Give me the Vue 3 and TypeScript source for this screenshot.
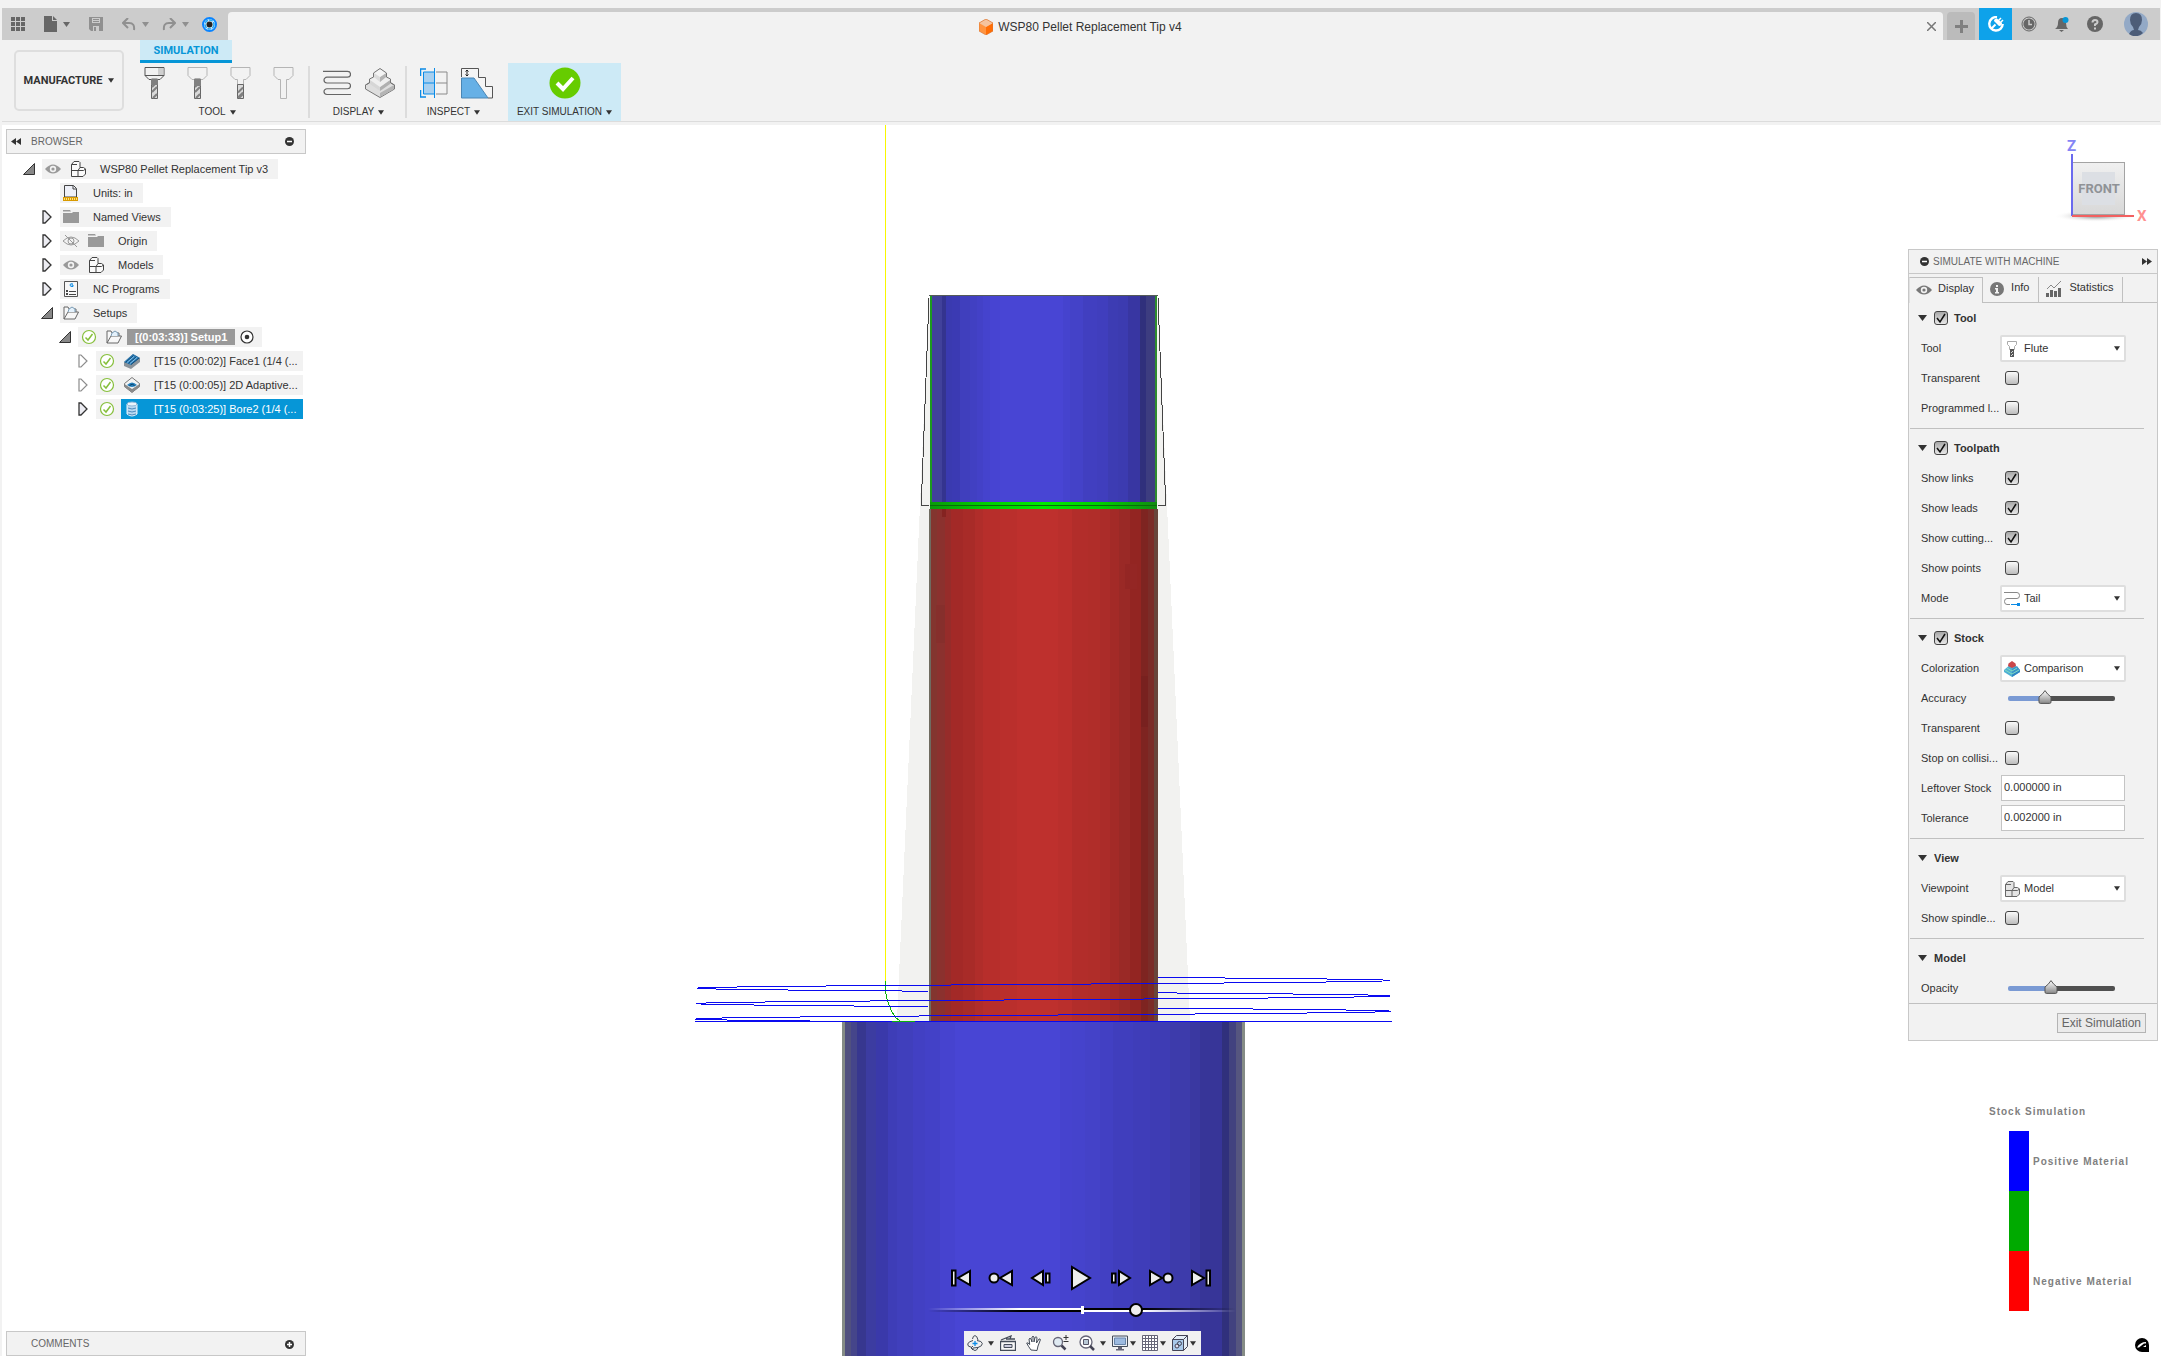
<script setup lang="ts">
import { h, ref } from 'vue'

interface IconDef { w: number; h: number; body: string }

const shaft = (y: number) =>
  `<path d="M7.500 ${y}h6v${31.5 - y}h-6z" fill="#dadada" stroke="#666" stroke-width="1"/><path d="M8 ${y + 8}l5-5M8 ${y + 13}l5-5M9 31l4-4" stroke="#808080" stroke-width="2"/>`
const holder = (c: string) =>
  `<path d="M1 .5h19v8l-4 4h-11l-4-4z" fill="#f2f2f2" stroke="${c}"/>`
const clock = '<circle cx="8" cy="8" r="7" fill="none" stroke="#666" stroke-width="1"/><circle cx="8" cy="8" r="5.600" fill="#666"/><path d="M8 4v4.500h3" fill="none" stroke="#ccc" stroke-width="1.500"/>'
const boxes = (c: string, f: string) =>
  `<path d="M1.500 15.500V3.500L4 .5h5l1 1v5h3.500l2 1.500v5L13 15.500z" fill="${f}" stroke="${c}" stroke-linejoin="round"/><path d="M1.500 9.500H8v6M8 9.500l2-3M8 9.500h5.500l2-1.500M1.500 3.500H7" fill="none" stroke="${c}"/>`
const eye = (c: string) =>
  `<path d="M0 8Q8-1 16 8Q8 17 0 8z" fill="${c}"/><circle cx="8" cy="8" r="3.200" fill="#f2f2f2"/><circle cx="8" cy="8" r="1.600" fill="${c}"/>`
const pb = 'fill="#eee" stroke="#000" stroke-width="2" stroke-linejoin="miter"'

const icons: Record<string, IconDef> = {
  apps: { w: 14, h: 14, body: '<path d="M0 0h4v4H0zM5 0h4v4H5zM10 0h4v4h-4zM0 5h4v4H0zM5 5h4v4H5zM10 5h4v4h-4zM0 10h4v4H0zM5 10h4v4H5zM10 10h4v4h-4z" fill="#666"/>' },
  file: { w: 13, h: 16, body: '<path d="M0 0h8v5h5v11H0z" fill="#666"/><path d="M9 0l4 4H9z" fill="#666"/>' },
  save: { w: 14, h: 14, body: '<path d="M0 0h14v14H2l-2-2z" fill="#909090"/><path d="M3 1h8v5H3zM4 9h6v5H4z" fill="#ccc"/><path d="M4 2h6v1H4zM4 4h6v1H4zM5 10h2v4H5z" fill="#909090"/>' },
  undo: { w: 14, h: 13, body: '<path d="M6 0L1 5l5 5M1 5h6q6 0 5 7" fill="none" stroke="#909090" stroke-width="2"/>' },
  redo: { w: 14, h: 13, body: '<path d="M8 0l5 5-5 5M13 5H7Q1 5 2 12" fill="none" stroke="#909090" stroke-width="2"/>' },
  lens: { w: 15, h: 15, body: '<circle cx="7.500" cy="7.500" r="6.500" fill="#dff2ff" stroke="#0a84ff" stroke-width="2"/><circle cx="7.500" cy="7.500" r="4.500" fill="none" stroke="#22a7f0" stroke-width="1.500" stroke-dasharray="4 1"/><circle cx="7.500" cy="7.500" r="3" fill="#222"/>' },
  caret: { w: 7, h: 5, body: '<path d="M0 0h7L3.500 5z" fill="currentColor"/>' },
  cube: { w: 14, h: 16, body: '<path d="M7 0l7 4v8l-7 4-7-4V4z" fill="#ff9440"/><path d="M7 8l7-4v8l-7 4z" fill="#ff6d05"/><path d="M7 0l7 4-7 4-7-4z" fill="#f5c39d"/><path d="M7 0l7 4v8l-7 4-7-4V4z" fill="none" stroke="#d9783a" stroke-width=".7"/>' },
  close: { w: 9, h: 9, body: '<path d="M0 0l9 9M9 0L0 9" stroke="#777" stroke-width="1.500"/>' },
  plus: { w: 13, h: 13, body: '<path d="M6.500 0v13M0 6.500h13" stroke="#808080" stroke-width="3"/>' },
  ext: { w: 16, h: 16, body: '<path d="M9 1.200A6.700 6.700 0 1 0 14.700 8" fill="none" stroke="#fff" stroke-width="2.400"/><path d="M3.500 12.500l4-4" stroke="#fff" stroke-width="2"/><path d="M6 5l5 5q3 0 3-3L9 2.500Q6 2.500 6 5z" fill="#fff"/><path d="M10 5l3-3M12 7l3-3" stroke="#fff" stroke-width="1.500"/>' },
  clock: { w: 16, h: 16, body: clock },
  bell: { w: 16, h: 16, body: '<path d="M1 13q3-2 3-6 0-5 4-5t4 5q0 4 2 6z" fill="#666"/><path d="M5 14h5l-2.500 2z" fill="#666"/><circle cx="11.500" cy="4" r="3" fill="#0696d7"/>' },
  help: { w: 16, h: 16, body: '<circle cx="8" cy="8" r="8" fill="#666"/><path d="M5.500 6.500Q5.500 4 8 4t2.500 2.300Q10.500 7.500 8 8.500v1.500" fill="none" stroke="#ccc" stroke-width="2"/><path d="M7 11.500h2v2H7z" fill="#ccc"/>' },
  avatar: { w: 24, h: 24, body: '<circle cx="12" cy="12" r="12" fill="#93a9c6"/><path d="M5 22q2-4 5-4l-1-3Q6 12 6 8q0-7 6-7t6 7q0 4-3 7l-1 3q3 0 5 3Q12 27 5 22z" fill="#4d5d78"/>' },
  tool1: { w: 21, h: 32, body: holder('#555') + '<path d="M14 1h5.500v7H14z" fill="#cfcfcf"/><path d="M1 8.500h19" stroke="#555"/>' + shaft(12) + '<path d="M7 12h7v6H7z" fill="#808080"/>' },
  tool2: { w: 21, h: 32, body: holder('#b5b5b5') + shaft(12) + '<path d="M7 12h7v7H7z" fill="#808080"/>' },
  tool3: { w: 21, h: 32, body: '<path d="M7.500 18v-5.500H5l-4-4v-8h19v8l-4 4h-2.500V18" fill="#f2f2f2" stroke="#b5b5b5"/>' + shaft(17.5) },
  tool4: { w: 21, h: 32, body: '<path d="M1 .5h19v8l-4 4h-2.500v19h-6v-19H5l-4-4z" fill="#f2f2f2" stroke="#b5b5b5"/>' },
  path: { w: 28, h: 26, body: '<path d="M0 1.500h24.500a3 3 0 0 1 0 6H4a3 3 0 0 0 0 6h20.500a3 3 0 0 1 0 6H4a3 3 0 0 0 0 6h24" transform="scale(1 .96)" fill="none" stroke="#666" stroke-width="1.200"/>' },
  pyramid: { w: 30, h: 30, body: '<path d="M15 8L29.500 17v4L15 29.500.5 21v-4z" fill="#dedede" stroke="#777"/><path d="M15 25l14-8v4l-14 8z" fill="#b4b4b4"/><path d="M15 4l10 8v4l-10 7-10-7v-4z" fill="#d6d6d6"/><path d="M15 19l10-7v4l-10 7z" fill="#b0b0b0"/><path d="M5 12l5-3h10l5 3-10 7z" fill="#efefef"/><path d="M15 0l6 5v4l-6 5-6-5V5z" fill="#dcdcdc"/><path d="M15 9l6-4v4l-6 5z" fill="#b4b4b4"/><path d="M15 1l6 4-6 4-6-4z" fill="#f4f4f4"/><path d="M.5 17l4-2v-4l4-2V5L15 .5 21.500 5v4l4 2v4l4 2" fill="none" stroke="#777"/>' },
  section: { w: 28, h: 30, body: '<path d="M3 4h11v22H3z" fill="#a8d0f0"/><path d="M16 4h11v22H16M16 15h11" fill="none" stroke="#8a8a8a"/><path d="M14.500 0v30M3.500 15h11M3.500 4v22h11M3.500 4h11" stroke="#0b8be6" fill="none"/><path d="M6 1H.5v7M6 29H.5v-7" fill="none" stroke="#0b8be6" stroke-width="1.500"/>' },
  steps: { w: 32, h: 31, body: '<path d="M.5 9V.5h17v9h7v9h7V30H27" fill="#f5f5f5" stroke="#555"/><path d="M.5 10H13l14 20H.5z" fill="#66b0e6" stroke="#4a86b5"/><path d="M6 2v6M4.500 3.500L6 2l1.500 1.500M4.500 6.500L6 8l1.500-1.500" stroke="#222" fill="none"/>' },
  ok: { w: 32, h: 32, body: '<circle cx="16" cy="16" r="15.500" fill="#66cc00"/><path d="M8 16l6 6L24 11" fill="none" stroke="#fff" stroke-width="4"/>' },
  rewind: { w: 10, h: 7, body: '<path d="M5 0v7L0 3.500zM10 0v7L5 3.500z" fill="#333"/>' },
  forward: { w: 10, h: 7, body: '<path d="M0 0v7l5-3.500zM5 0v7l5-3.500z" fill="#333"/>' },
  minus: { w: 9, h: 9, body: '<circle cx="4.500" cy="4.500" r="4.500" fill="#333"/><path d="M2 4.500h5" stroke="#fff" stroke-width="1.500"/>' },
  add: { w: 9, h: 9, body: '<circle cx="4.500" cy="4.500" r="4.500" fill="#333"/><path d="M2 4.500h5M4.500 2v5" stroke="#fff" stroke-width="1.500"/>' },
  open: { w: 12, h: 12, body: '<path d="M11.500.5v11H.5z" fill="#888" stroke="#333"/>' },
  shut: { w: 10, h: 14, body: '<path d="M1 1h2l6 6-6 6H1z" fill="#ececf2" stroke="#333" stroke-width="1.300"/>' },
  shutDim: { w: 10, h: 14, body: '<path d="M1 1h2l6 6-6 6H1z" fill="#fff" stroke="#8c8c8c" stroke-width="1.200"/>' },
  eye: { w: 16, h: 16, body: eye('#999') },
  eyeDark: { w: 16, h: 16, body: eye('#777') },
  eyeOff: { w: 16, h: 16, body: '<path d="M0 8Q8 0 16 8Q8 16 0 8z" fill="none" stroke="#999"/><circle cx="8" cy="8" r="3" fill="none" stroke="#999"/><path d="M2 2l12 12" stroke="#999"/>' },
  boxes: { w: 16, h: 16, body: boxes('#444', '#fafafa') },
  units: { w: 16, h: 16, body: '<path d="M1.500 12V.5h9l3 3V12z" fill="#eef0f8" stroke="#444"/><path d="M10 .5v3.500h3.500" fill="none" stroke="#444"/><path d="M0 12h15v4H0z" fill="#d99a00"/><path d="M1 14h13" stroke="#ffe27a" stroke-width="2" stroke-dasharray="1 1"/>' },
  folder: { w: 16, h: 16, body: '<path d="M0 1h7l1 1.500H0zM0 4h9l1-1h6v11H0z" fill="#999"/>' },
  nc: { w: 16, h: 16, body: '<path d="M1.500.5h13v15h-13z" fill="#f7f7f7" stroke="#555"/><path d="M10 3q-3-1-3 1t3 1.500V4H8.500" fill="none" stroke="#0b8be6"/><path d="M3 9h2v2H3zM3 12h2v2H3z" fill="#444"/><path d="M6 10.500h7M6 13.500h7" stroke="#444"/>' },
  setup: { w: 16, h: 16, body: '<path d="M1 14V2h4l1 2h7v3M1 14L5 7h10.500L12 14z" fill="#f7f7f7" stroke="#666" stroke-linejoin="round"/><path d="M5 7l1-3 3-2 3 2v3" fill="#e4f1fb" stroke="#7a9bb5"/>' },
  check: { w: 16, h: 16, body: '<circle cx="8" cy="8" r="6.500" fill="#fff" stroke="#86bf3b" stroke-width="1.200"/><path d="M4.500 8.500L7 11l4.500-6" fill="none" stroke="#86bf3b" stroke-width="1.500"/>' },
  radio: { w: 14, h: 14, body: '<circle cx="7" cy="7" r="6" fill="#fff" stroke="#333" stroke-width="1.200"/><circle cx="7" cy="7" r="2.300" fill="#333"/>' },
  face: { w: 16, h: 16, body: '<path d="M0 9L9 1l7 4v4l-9 7-7-3z" fill="#8a9299"/><path d="M0 9L9 1l7 4-9 7z" fill="#2f7fb8"/><path d="M1.500 9.500l8-7M4.500 10.500l8-7M7 11.500l8-6.500" stroke="#124a75"/><path d="M3 9.500l7-6M6 10.500l7-6" stroke="#7fc0ec"/>' },
  adaptive: { w: 16, h: 16, body: '<path d="M8 .5l7.500 6v3L8 15.500.5 9.500v-3z" fill="#f3f3f3" stroke="#777"/><path d="M.5 7L8 12l7.500-5v3L8 15.500.5 10z" fill="#8a8a8a"/><path d="M3 8q5-5 10 0-5 4-10 0z" fill="#2680bd"/><path d="M5.500 8.500q3-2.500 5 0" fill="none" stroke="#0b3f66"/>' },
  bore: { w: 16, h: 16, body: '<path d="M3 3v10q5 4 10 0V3z" fill="#b9d9f2" stroke="#e8f3fb"/><ellipse cx="8" cy="3" rx="5" ry="2" fill="#eaf4fc" stroke="#8fb6d6"/><path d="M4 7q4 2 8 0M4 10q4 2 8 0M4 13q4 2 8 0" stroke="#4d8bbd" fill="none"/>' },
  info: { w: 14, h: 14, body: '<circle cx="7" cy="7" r="7" fill="#777"/><path d="M6 3h2v2H6zM5 6h3v4h1v1.500H5V10h1V7.500H5z" fill="#f2f2f2"/>' },
  stats: { w: 16, h: 16, body: '<path d="M0 12h3v4H0zM4 9h3v7H4zM8 10h3v6H8zM12 7h3v9h-3z" fill="#666"/><path d="M1 8l4-4 3 3 7-7" fill="none" stroke="#888"/>' },
  tri: { w: 9, h: 6, body: '<path d="M0 0h9L4.500 6z" fill="#333"/>' },
  flute: { w: 16, h: 16, body: '<path d="M3.500.5h9v3l-2 2v3h-5v-3l-2-2z" fill="#fff" stroke="#aaa"/><path d="M6 8h4v8H6z" fill="#555"/><path d="M7 12l2-2M7 15l2-2" stroke="#ddd"/>' },
  tail: { w: 16, h: 16, body: '<path d="M0 1.500h13q2.500 0 2.500 3t-2.500 3H3q-2.500 0-2.500 3t2.500 3h3" fill="none" stroke="#888"/><path d="M7 13.500h6" stroke="#0b8be6"/><path d="M13 12h3v3h-3z" fill="#0b8be6"/>' },
  compare: { w: 16, h: 16, body: '<path d="M8 2l8 7v2l-8 5-8-5V9z" fill="#4fb0d4"/><path d="M8 13l8-4v2l-8 5z" fill="#2f86c4"/><path d="M8 8l5-3 3 4-8 4z" fill="#3a94cb"/><path d="M1 9l7 4 7-4M3 7l5 3 5-3" stroke="#7fdcc0" fill="none"/><path d="M8 0l3.500 2.500L12 5 8 7 4 5l.5-2.500z" fill="#c9474b"/>' },
  model: { w: 16, h: 16, body: boxes('#666', '#e4e4e4') },
  first: { w: 22, h: 18, body: `<path d="M2 1.500h3.500v15H2z" ${pb}/><path d="M20 2v14L8 9z" ${pb}/>` },
  prevOp: { w: 26, h: 18, body: `<circle cx="6" cy="9" r="4.500" ${pb}/><path d="M24 2v14L12 9z" ${pb}/>` },
  stepBack: { w: 22, h: 18, body: `<path d="M13 2v14L2 9z" ${pb}/><path d="M16 4.500h3.500v9H16z" ${pb}/>` },
  play: { w: 22, h: 26, body: `<path d="M2 2v22l18-11z" ${pb}/>` },
  stepFwd: { w: 22, h: 18, body: `<path d="M9 2v14l11-7z" ${pb}/><path d="M2 4.500h3.500v9H2z" ${pb}/>` },
  nextOp: { w: 26, h: 18, body: `<circle cx="20" cy="9" r="4.500" ${pb}/><path d="M2 2v14l12-7z" ${pb}/>` },
  last: { w: 22, h: 18, body: `<path d="M16.500 1.500H20v15h-3.500z" ${pb}/><path d="M2 2v14l12-7z" ${pb}/>` },
  orbit: { w: 16, h: 16, body: '<path d="M5 12.500Q0 11.500.7 9T6 5.500M10 5.500q5 .5 5.300 3T11 12.500l-5 .5M6 11l-2 2 2 2M5.500 4Q6 .6 8 .6T11 5M5.500 13Q6 15.500 8 15.500t3-3" fill="none" stroke="#444c58"/><path d="M8 6v5M5.500 8.500h5" stroke="#0b8be6" stroke-width="1.300"/>' },
  look: { w: 16, h: 16, body: '<path d="M.5 6.500h15v9H.5zM1 5l10-4-1 3M6 4h9" fill="#f7f7f7" stroke="#444c58" stroke-width="1.300"/><path d="M4 9.500h8v3H4z" fill="#ccd" stroke="#444c58"/>' },
  hand: { w: 16, h: 16, body: '<path d="M5 15Q2 11 .7 8q1-1 3 1.500L3 4q1-1.500 2 0l1 3V2q1-1.500 2 0v5l1-4.500q1-1.500 2 0L10.500 8 13 4q1.500-.5 1.300 1L12 11l-1 4.500z" fill="#fff" stroke="#444c58"/>' },
  zoom: { w: 17, h: 16, body: '<circle cx="6" cy="7" r="4.500" fill="#dfeaf2" stroke="#667" stroke-width="1.300"/><path d="M9.500 10.500l4 4" stroke="#445" stroke-width="2.500"/><path d="M14 0v5M11.500 2.500h5M11.500 6.500h5" stroke="#333"/>' },
  fit: { w: 16, h: 16, body: '<circle cx="7" cy="7" r="6" fill="#fff" stroke="#667" stroke-width="1.300"/><path d="M4.500 4.500h5v5h-5z" fill="#b9c9d6" stroke="#556"/><path d="M11 11l4 4" stroke="#445" stroke-width="2.500"/>' },
  screen: { w: 16, h: 16, body: '<path d="M.5 1h15v10.500H.5z" fill="#e8eef5" stroke="#444c58"/><path d="M2.500 3h11v6.500h-11z" fill="#9dbbe0" stroke="#6a86aa"/><path d="M6 12h4v2h2v1.500H4V14h2z" fill="#667"/>' },
  grid: { w: 16, h: 16, body: '<path d="M.5.5h15v15H.5zM3.500 0v16M6.500 0v16M9.500 0v16M12.500 0v16M0 3.500h16M0 6.500h16M0 9.500h16M0 12.500h16" fill="#fff" stroke="#667"/>' },
  view: { w: 16, h: 16, body: '<path d="M.5 4.500l4-4h11v11l-4 4H.5zM.5 4.500h11v11M11.500 4.500l4-4" fill="#e4edf5" stroke="#445"/><path d="M1 5h10v10H1z" fill="#a9c9ea"/><circle cx="5" cy="11" r="2" fill="#dde" stroke="#445"/><circle cx="7.500" cy="8.500" r="2" fill="none" stroke="#445"/>' },
  brand: { w: 14, h: 14, body: '<path d="M7 0a7 7 0 0 1 7 7v7H7A7 7 0 0 1 7 0z" fill="#000"/><path d="M2 9.500Q5 4 11 4v1.500H9L4 9.500zM5 11l6-4v2l-3 0z" fill="#fff"/>' },
}

const Ic = (p: { n: string }) => {
  const d = icons[p.n]
  return h('svg', { width: d.w, height: d.h, viewBox: `0 0 ${d.w} ${d.h}`, 'aria-hidden': 'true', innerHTML: d.body })
}
Ic.props = ['n']

interface Node { level: number; arrow?: string; icons: string[]; text: string; kind?: string }
const tree: Node[] = [
  { level: 0, arrow: 'open', icons: ['eye', 'boxes'], text: 'WSP80 Pellet Replacement Tip v3' },
  { level: 1, icons: ['units'], text: 'Units: in' },
  { level: 1, arrow: 'shut', icons: ['folder'], text: 'Named Views' },
  { level: 1, arrow: 'shut', icons: ['eyeOff', 'folder'], text: 'Origin' },
  { level: 1, arrow: 'shut', icons: ['eye', 'boxes'], text: 'Models' },
  { level: 1, arrow: 'shut', icons: ['nc'], text: 'NC Programs' },
  { level: 1, arrow: 'open', icons: ['setup'], text: 'Setups' },
  { level: 2, arrow: 'open', icons: ['check', 'setup'], text: '[(0:03:33)] Setup1', kind: 'setup' },
  { level: 3, arrow: 'shutDim', icons: ['check', 'face'], text: '[T15 (0:00:02)] Face1 (1/4 (...', kind: 'op' },
  { level: 3, arrow: 'shutDim', icons: ['check', 'adaptive'], text: '[T15 (0:00:05)] 2D Adaptive...', kind: 'op' },
  { level: 3, arrow: 'shut', icons: ['check', 'bore'], text: '[T15 (0:03:25)] Bore2 (1/4 (...', kind: 'op active' },
]

interface Field { id: string; label: string; type: 'check' | 'select' | 'range' | 'text'; on?: boolean; value?: string | number; icon?: string }
interface Section { title: string; toggle: boolean; fields: Field[] }
const sections = ref<Section[]>([
  { title: 'Tool', toggle: true, fields: [
    { id: 'tool', label: 'Tool', type: 'select', value: 'Flute', icon: 'flute' },
    { id: 'tool-transparent', label: 'Transparent', type: 'check', on: false },
    { id: 'programmed', label: 'Programmed l...', type: 'check', on: false },
  ] },
  { title: 'Toolpath', toggle: true, fields: [
    { id: 'links', label: 'Show links', type: 'check', on: true },
    { id: 'leads', label: 'Show leads', type: 'check', on: true },
    { id: 'cutting', label: 'Show cutting...', type: 'check', on: true },
    { id: 'points', label: 'Show points', type: 'check', on: false },
    { id: 'mode', label: 'Mode', type: 'select', value: 'Tail', icon: 'tail' },
  ] },
  { title: 'Stock', toggle: true, fields: [
    { id: 'color', label: 'Colorization', type: 'select', value: 'Comparison', icon: 'compare' },
    { id: 'accuracy', label: 'Accuracy', type: 'range', value: 32 },
    { id: 'stock-transparent', label: 'Transparent', type: 'check', on: false },
    { id: 'collision', label: 'Stop on collisi...', type: 'check', on: false },
    { id: 'leftover', label: 'Leftover Stock', type: 'text', value: '0.000000 in' },
    { id: 'tolerance', label: 'Tolerance', type: 'text', value: '0.002000 in' },
  ] },
  { title: 'View', toggle: false, fields: [
    { id: 'viewpoint', label: 'Viewpoint', type: 'select', value: 'Model', icon: 'model' },
    { id: 'spindle', label: 'Show spindle...', type: 'check', on: false },
  ] },
  { title: 'Model', toggle: false, fields: [
    { id: 'opacity', label: 'Opacity', type: 'range', value: 39 },
  ] },
])

const playback = [
  ['first', 'Start'], ['prevOp', 'Previous operation'], ['stepBack', 'Step back'], ['play', 'Play'],
  ['stepFwd', 'Step forward'], ['nextOp', 'Next operation'], ['last', 'End'],
]
/* icon, button class, accessible name */
const nav: [string, string, string][] = [
  ['orbit', 'drop-wide', 'Orbit'], ['look', '', 'Look at'], ['hand', '', 'Pan'], ['zoom', '', 'Zoom'],
  ['fit', 'drop-wide', 'Fit'], ['screen', 'drop-near', 'Display settings'], ['grid', 'drop-near', 'Grid'], ['view', 'drop-near', 'Viewports'],
]
const progress = ref(684)

/* Shading bands of the stock: left edge of each band and its colour. */
type Band = [number, string]
const bands = (list: Band[], end: number) =>
  list.map(([x, fill], i) => ({ x, fill, width: (list[i + 1]?.[0] ?? end) - x }))
const upper = bands([
  [930, '#1d9a1d'], [932, '#41419b'], [942, '#34348f'], [946, '#3a3ab0'], [952, '#3b3ab3'], [960, '#403fbd'], [970, '#4140c2'],
  [977, '#4341c7'], [983, '#4543cd'], [990, '#4744d2'], [1000, '#4845d4'], [1063, '#4543ce'], [1070, '#4442c8'],
  [1083, '#413fc0'], [1097, '#403ebd'], [1108, '#3d3cb3'], [1118, '#3c3bb0'],
  [1128, '#3836a2'], [1140, '#30307c'], [1146, '#3d3d80'], [1155, '#2e8b2e'],
], 1157)
const middle = bands([
  [929, '#6f6b60'], [931, '#83352f'], [937, '#8b312e'], [945, '#962c2a'], [951, '#a32927'], [963, '#a82b28'],
  [975, '#b02d2a'], [983, '#b72e2b'], [1000, '#ba2f2c'], [1017, '#be302d'], [1058, '#ba2f2c'], [1072, '#b22d2a'],
  [1088, '#b02d29'], [1100, '#ab2c29'], [1110, '#a32a27'], [1119, '#9a2926'], [1130, '#932522'], [1141, '#7e2421'], [1148, '#7b2c28'], [1154, '#68453b'],
], 1158)
const lower = bands([
  [842, '#858c86'], [845, '#50507f'], [851, '#45458a'], [857, '#37378f'], [866, '#3c3ca1'], [876, '#3a39aa'],
  [888, '#3e3db7'], [897, '#403fbc'], [913, '#4240c3'], [925, '#4341c7'], [940, '#4643cf'], [955, '#4845d4'], [1060, '#4643ce'], [1072, '#4543cc'], [1085, '#4442c8'],
  [1100, '#4240c3'], [1113, '#403ebd'], [1133, '#3f3db9'], [1150, '#3e3cb4'], [1170, '#3d3bab'], [1190, '#3a38a1'], [1200, '#373598'],
  [1222, '#30307c'], [1229, '#42427f'], [1236, '#56567f'], [1242, '#858c86'],
], 1245)

/* Helical passes, as one-pixel runs: start, end, row. */
const runs: [number, number, number][] = [
  [1158, 1225, 977], [1225, 1327, 978], [1327, 1383, 979], [1383, 1390, 980], [1326, 1382, 981], [1224, 1326, 982],
  [1091, 1224, 983], [951, 1091, 984], [826, 951, 985], [737, 826, 986], [698, 737, 987], [697, 716, 988],
  [716, 788, 989], [788, 902, 990], [902, 928, 991], [1158, 1177, 992], [1177, 1293, 993], [1293, 1368, 994],
  [1368, 1390, 995], [1354, 1390, 996], [1268, 1354, 997], [1144, 1268, 998], [1004, 1144, 999], [870, 1004, 1000],
  [765, 870, 1001], [706, 765, 1002], [696, 706, 1003], [701, 754, 1004], [754, 854, 1005], [854, 928, 1006],
  [1158, 1253, 1008], [1253, 1346, 1009], [1346, 1389, 1010], [1375, 1391, 1011], [1307, 1375, 1012],
  [1195, 1307, 1013], [1058, 1195, 1014], [919, 1058, 1015], [800, 919, 1016], [722, 800, 1017],
  [696, 722, 1018], [695, 727, 1019], [727, 810, 1020], [695, 1392, 1021],
]
const helix = runs.map(([a, b, y]) => `M${a} ${y}H${b}v1H${a}z`).join('')
</script>

<template>
  <div class="app">
    <header class="titlebar">
      <div class="quick">
        <button aria-label="Data panel"><Ic n="apps" /></button>
        <button class="dark" aria-label="File"><Ic n="file" /><Ic n="caret" /></button>
        <button aria-label="Save"><Ic n="save" /></button>
        <button aria-label="Undo"><Ic n="undo" /><Ic n="caret" /></button>
        <button class="tight" aria-label="Redo"><Ic n="redo" /><Ic n="caret" /></button>
        <button class="tight" aria-label="Extensions"><Ic n="lens" /></button>
      </div>
      <div class="doc">
        <div class="doc-name"><Ic n="cube" /><span>WSP80 Pellet Replacement Tip v4</span></div>
        <button aria-label="Close"><Ic n="close" /></button>
      </div>
      <button class="new" aria-label="New tab"><Ic n="plus" /></button>
      <div class="account">
        <button class="on" aria-label="Updates"><Ic n="ext" /></button>
        <button aria-label="Job status"><Ic n="clock" /></button>
        <button aria-label="Notifications"><Ic n="bell" /></button>
        <button aria-label="Help"><Ic n="help" /></button>
        <button class="me" aria-label="Account"><Ic n="avatar" /></button>
      </div>
    </header>

    <nav class="ribbon">
      <button class="workspace">MANUFACTURE <Ic n="caret" /></button>
      <div class="tools">
        <button class="tab">SIMULATION</button>
        <div class="groups">
          <div class="group first">
            <div class="icons">
              <button v-for="i in 4" :key="i" :aria-label="'Tool display ' + i"><Ic :n="'tool' + i" /></button>
            </div>
            <button class="menu">TOOL <Ic n="caret" /></button>
          </div>
          <div class="group">
            <div class="icons">
              <button aria-label="Toolpath"><Ic n="path" /></button>
              <button aria-label="Stock"><Ic n="pyramid" /></button>
            </div>
            <button class="menu">DISPLAY <Ic n="caret" /></button>
          </div>
          <div class="group plain">
            <div class="icons">
              <button aria-label="Section"><Ic n="section" /></button>
              <button aria-label="Distance"><Ic n="steps" /></button>
            </div>
            <button class="menu">INSPECT <Ic n="caret" /></button>
          </div>
          <div class="group exit">
            <div class="icons"><button aria-label="Finish"><Ic n="ok" /></button></div>
            <button class="menu">EXIT SIMULATION <Ic n="caret" /></button>
          </div>
        </div>
      </div>
    </nav>

    <main class="stage">
      <svg class="scene" viewBox="0 125 2161 1231" preserveAspectRatio="xMidYMin slice" shape-rendering="crispEdges" aria-hidden="true">
        <polygon points="929,298 1158,298 1167,505 1190,1021 897,1021 920,505" fill="#f2f2f0" />
        <g>
          <rect v-for="b in lower" :key="'l' + b.x" :x="b.x" y="1021" :width="b.width" height="335" :fill="b.fill" />
          <rect v-for="b in middle" :key="'m' + b.x" :x="b.x" y="509" :width="b.width" height="512" :fill="b.fill" />
          <rect v-for="b in upper" :key="'u' + b.x" :x="b.x" y="296" :width="b.width" height="206" :fill="b.fill" />
        </g>
        <rect x="942" y="502" width="4" height="15" fill="#842321" />
        <rect x="936" y="605" width="9" height="38" fill="#862f2c" />
        <rect x="1125" y="564" width="12" height="25" fill="#942624" />
        <rect x="1141" y="676" width="7" height="51" fill="#78211f" />
        <linearGradient id="floor">
          <stop offset="0" stop-color="#0a9a0a" /><stop offset=".25" stop-color="#00cf00" />
          <stop offset=".5" stop-color="#00ea00" /><stop offset=".75" stop-color="#00cf00" />
          <stop offset="1" stop-color="#118a11" />
        </linearGradient>
        <rect x="930" y="502" width="227" height="7" fill="url(#floor)" />
        <rect x="930" y="505" width="227" height="1" fill="#0b6b0b" />
        <rect x="929" y="295" width="229" height="1" fill="#555c58" />
        <path d="M929 298L921.500 498V505.500H929M1158 505.500H1165.500V498L1158 298" fill="none" stroke="#444" />
        <rect x="885" y="125" width="1" height="856" fill="#f8f800" />
        <path d="M885.500 981V991L887.500 1001L891.500 1011L896 1018L900 1020.500" fill="none" stroke="#0ab40a" />
        <path :d="helix" fill="#0a0af0" />
        <rect x="892" y="1021" width="23" height="1" fill="#0ab40a" />
      </svg>

      <div class="overlay">
        <div class="left">
          <section class="browser">
            <div class="bar"><Ic n="rewind" /><span>BROWSER</span><Ic n="minus" /></div>
            <ul>
              <li v-for="(n, i) in tree" :key="i" :style="{ paddingLeft: 16 + 18 * n.level + 'px' }">
                <i class="arrow"><Ic v-if="n.arrow" :n="n.arrow" /></i>
                <div class="chip" :class="n.kind">
                  <Ic v-for="k in n.icons" :key="k" :n="k" />
                  <span>{{ n.text }}</span>
                  <Ic v-if="n.kind === 'setup'" n="radio" />
                </div>
              </li>
            </ul>
          </section>
          <div class="bar"><span>COMMENTS</span><Ic n="add" /></div>
        </div>

        <div class="mid">
          <div class="playback">
            <button v-for="p in playback" :key="p[0]" :aria-label="p[1]"><Ic :n="p[0]" /></button>
          </div>
          <input v-model="progress" class="timeline" type="range" min="0" max="1000" aria-label="Timeline" />
          <div class="nav">
            <button v-for="n in nav" :key="n[0]" :class="n[1]" :aria-label="n[2]"><Ic :n="n[0]" /><Ic v-if="n[1]" n="caret" /></button>
          </div>
        </div>

        <div class="right">
          <svg class="viewcube" width="110" height="124" viewBox="2048 125 110 124">
            <defs>
              <linearGradient id="cubeface" x2="0" y2="1"><stop stop-color="#f0f0f0" /><stop offset="1" stop-color="#d8d8d8" /></linearGradient>
              <radialGradient id="cubeshade"><stop stop-color="#777" /><stop offset="1" stop-color="#fff" stop-opacity="0" /></radialGradient>
            </defs>
            <ellipse cx="2096" cy="216" rx="42" ry="6" fill="url(#cubeshade)" />
            <rect x="2072.500" y="162.500" width="52" height="52" fill="url(#cubeface)" stroke="#a3a3a3" />
            <rect x="2082" y="172" width="33" height="33" fill="#dcdfe4" />
            <text x="2099" y="193" text-anchor="middle" class="front">FRONT</text>
            <path d="M2072 154v62" stroke="#6a6aee" stroke-width="2" />
            <path d="M2072 216h62" stroke="#f26060" stroke-width="2" />
            <text x="2067" y="151" class="axis" fill="#8585f5">Z</text>
            <text x="2137" y="221" class="axis" fill="#ff9090">X</text>
          </svg>

          <section class="panel">
            <div class="bar"><Ic n="minus" /><span>SIMULATE WITH MACHINE</span><Ic n="forward" /></div>
            <div class="tabs">
              <button class="current"><Ic n="eyeDark" />Display</button>
              <button><Ic n="info" />Info</button>
              <button><Ic n="stats" />Statistics</button>
            </div>
            <fieldset v-for="s in sections" :key="s.title">
              <div class="row head">
                <Ic n="tri" />
                <input v-if="s.toggle" :id="'s-' + s.title" type="checkbox" checked />
                <label :for="s.toggle ? 's-' + s.title : undefined">{{ s.title }}</label>
              </div>
              <div v-for="f in s.fields" :key="f.id" class="row">
                <label :for="f.id">{{ f.label }}</label>
                <input v-if="f.type === 'check'" :id="f.id" v-model="f.on" type="checkbox" />
                <div v-else-if="f.type === 'select'" class="select">
                  <select :id="f.id"><option>{{ f.value }}</option></select>
                  <Ic :n="f.icon" class="lead" />
                  <Ic n="caret" class="drop" />
                </div>
                <input v-else-if="f.type === 'range'" :id="f.id" v-model="f.value" type="range" class="slider" :style="{ '--fill': f.value + '%' }" />
                <input v-else :id="f.id" v-model="f.value" type="text" />
              </div>
            </fieldset>
            <div class="foot"><button>Exit Simulation</button></div>
          </section>

          <section class="legend">
            <h2>Stock Simulation</h2>
            <div class="level"><i style="background: #0000ff"></i><span>Positive Material</span></div>
            <div class="level"><i style="background: #00aa00"></i></div>
            <div class="level"><i style="background: #ff0000"></i><span>Negative Material</span></div>
          </section>
          <div class="brand"><Ic n="brand" /></div>
        </div>
      </div>
    </main>
  </div>
</template>

<style>
body { background: #f2f2f2; }
</style>

<style scoped>
.app {
  display: flex;
  flex-direction: column;
  min-height: 100vh;
  box-sizing: border-box;
  padding-top: 8px;
  font: 11px/16px "Liberation Sans", Arial, sans-serif;
  color: #333;
  background: #f2f2f2;
}
.app * { box-sizing: border-box; }
svg { display: block; flex: none; }
button {
  display: flex;
  align-items: center;
  justify-content: center;
  padding: 0;
  border: 0;
  background: none;
  font: inherit;
  color: inherit;
}

/* title bar */
.titlebar { display: flex; height: 32px; margin: 0 1px 0 2px; background: #ccc; }
.quick { display: flex; align-items: center; gap: 19px; width: 226px; padding-left: 9px; color: #909090; }
.quick button { gap: 6px; }
.quick .dark { color: #666; }
.quick .tight { margin-left: -6px; }
.doc {
  display: flex;
  flex: 1;
  align-items: center;
  margin-top: 4px;
  padding: 1px 7px 0 6px;
  border-radius: 4px 4px 0 0;
  background: #f2f2f2;
}
.doc-name { display: flex; flex: 1; justify-content: center; align-items: center; gap: 5px; font-size: 12px; }
.doc button { width: 9px; }
.new { width: 28px; margin: 4px 4px 0; border-radius: 4px 4px 0 0; background: #bbb; }
.account { display: flex; }
.account button { width: 33px; }
.account .on { background: #0ea2ea; }
.account .me { width: 49px; }

/* ribbon */
.ribbon { display: flex; height: 82px; margin: 0 1px 3px 2px; border-bottom: 1px solid #dcdcdc; }
.workspace {
  gap: 6px;
  width: 110px;
  height: 61px;
  margin: 10px 16px 0 12px;
  border: 2px solid #dedede;
  border-radius: 5px;
  font: bold 11px/16px Roboto, sans-serif;
}
.workspace svg, .menu svg { width: 6px; height: 5px; }
.tab {
  width: 92px;
  height: 23px;
  padding-top: 2px;
  border-bottom: 3px solid #0696d7;
  background: #cdeaf6;
  color: #0696d7;
  font: bold 11px/16px Roboto, sans-serif;
}
.groups { display: flex; }
.group { display: flex; flex-direction: column; align-items: center; width: 97px; height: 58px; padding-top: 4px; position: relative; }
.group.first { width: 170px; padding-right: 12px; }
.group.plain { width: 101px; padding-right: 4px; }
.group.exit { width: 113px; background: #cdeaf6; }
.group:not(.plain, .exit)::after { content: ""; position: absolute; right: 0; top: 3px; width: 2px; height: 52px; background: #dcdcdc; }
.icons { display: flex; gap: 11px; }
.icons button { width: 32px; height: 32px; }
.menu { gap: 4px; margin-top: 5px; height: 16px; font-size: 10px; }
.first .menu, .plain .menu { margin-right: 4px; }

/* stage */
.stage { position: relative; display: flex; flex: 1; margin-left: 2px; background: #fff; overflow: hidden; }
.scene { position: absolute; top: 0; left: -2px; width: calc(100% + 2px); height: 100%; }
.overlay { position: relative; display: grid; grid-template-columns: 300px 1fr 300px; width: 100%; padding: 0 3px 0 4px; }
.left { display: flex; flex-direction: column; justify-content: space-between; padding-top: 4px; }
.bar {
  display: flex;
  align-items: center;
  height: 25px;
  padding: 0 11px 0 4px;
  border: 1px solid #c8c8c8;
  background: #f2f2f2;
  color: #666;
  font-size: 10px;
}
.bar span { flex: 1; }
.left .bar span { padding-left: 10px; }
.left > .bar { padding-top: 1px; }
.left > .bar span { padding-left: 20px; }
ul { margin: 3px 0 0; padding: 0; list-style: none; }
li { display: flex; align-items: center; height: 24px; }
.arrow { display: flex; justify-content: center; width: 14px; margin-right: 6px; }
.chip { display: flex; align-items: center; gap: 9px; height: 20px; padding: 0 10px 0 3px; background: #f2f2f2; white-space: nowrap; }
.chip span { padding-left: 5px; }
.chip.setup { gap: 5px; padding-right: 8px; }
.chip.setup svg:first-child { margin-right: 4px; }
.chip.setup span { padding: 0 8px; background: #999; color: #fff; font-weight: bold; }
.chip.op { width: 207px; padding-right: 0; }
.chip.active { background: linear-gradient(90deg, #f2f2f2 25px, #0696d7 25px); color: #fff; }

/* playback */
.mid { display: flex; flex-direction: column; justify-content: flex-end; align-items: center; padding-bottom: 1px; }
.playback { display: flex; margin: 0 2px 12px 0; }
.playback button { width: 40px; height: 26px; }
.timeline { appearance: none; width: 308px; height: 14px; margin: 0 0 14px; background: none; }
.timeline::-webkit-slider-runnable-track {
  height: 8px;
  background:
    linear-gradient(#fff, #fff) 153px 0 / 3px 8px no-repeat,
    linear-gradient(90deg, transparent, #fff 60%) 0 2px / 153px 2px no-repeat,
    linear-gradient(90deg, transparent, #000 60%) 0 4px / 153px 2px no-repeat,
    linear-gradient(90deg, #000 40%, transparent) 156px 2px / 152px 2px no-repeat,
    linear-gradient(90deg, #fff 40%, transparent) 156px 4px / 152px 2px no-repeat;
}
.timeline::-webkit-slider-thumb { appearance: none; width: 14px; height: 14px; margin-top: -3px; border: 2px solid #000; border-radius: 50%; background: #eee; }
.nav { display: flex; align-items: center; width: 237px; height: 24px; padding-left: 3px; background: #f1f1f1; }
.nav button { margin-right: 10px; }
.nav .drop-wide { gap: 5px; margin-right: 6px; }
.nav .drop-near { gap: 2px; margin-right: 6px; }
.nav button svg:nth-child(2) { width: 6px; height: 5px; }

/* right column */
.right { display: flex; flex-direction: column; align-items: flex-end; }
.front { font: bold 13px Roboto, sans-serif; fill: #8f9296; }
.axis { font: bold 15px Roboto, sans-serif; }
.panel { width: 250px; border: 1px solid #c8c8c8; background: #f2f2f2; }
.panel .bar { gap: 4px; height: 24px; padding: 0 5px 0 11px; border-width: 0 0 1px; }
.tabs { display: flex; height: 29px; padding-top: 3px; border-bottom: 1px solid #c0c0c0; }
.tabs button { gap: 7px; padding: 0 9px 5px 7px; border-right: 1px solid #c0c0c0; }
.tabs svg { margin-top: 4px; }
.tabs .current { gap: 6px; height: 26px; padding: 0 8px 5px 6px; border-top: 1px solid #c0c0c0; border-left: 1px solid #e0e0e0; background: #f2f2f2; }
fieldset { margin: 0 13px 4px 1px; padding: 0 0 5px; border: 0; border-bottom: 1px solid #c0c0c0; }
fieldset:last-of-type { margin-bottom: 0; padding: 0; border: 0; }
.row { display: flex; align-items: center; height: 30px; padding-left: 11px; }
.row > label { width: 79px; white-space: nowrap; }
.row.head { gap: 6px; padding-left: 8px; }
.row.head label { width: auto; font-weight: bold; }
.row.head svg { margin-right: 1px; }
input[type="checkbox"] {
  appearance: none;
  flex: none;
  width: 14px;
  height: 14px;
  margin: 0 0 0 5px;
  border: 1px solid #444;
  border-radius: 3px;
  background: linear-gradient(#fafafa, #bdbdbd);
}
.head input[type="checkbox"] { margin: 0; }
input[type="checkbox"]:checked {
  background:
    url("data:image/svg+xml,%3Csvg xmlns='http://www.w3.org/2000/svg' viewBox='0 0 12 12'%3E%3Cpath d='M2 6l3 4 5-8' fill='none' stroke='%23111' stroke-width='1.500'/%3E%3C/svg%3E") center / 12px 12px,
    linear-gradient(#a8a8a8, #e8e8e8);
}
.select { position: relative; width: 126px; height: 27px; }
select, input[type="text"] {
  appearance: none;
  width: 126px;
  height: 27px;
  border: 2px solid #dedede;
  border-radius: 2px;
  background: #fff;
  font: inherit;
  color: #333;
  padding: 0 0 0 22px;
}
input[type="text"] { width: 124px; height: 26px; margin-left: 1px; padding: 0 2px 2px; border: 1px solid #c4c4c4; border-radius: 0; }
.lead { position: absolute; left: 4px; top: 6px; }
.drop { position: absolute; right: 6px; top: 11px; width: 6px; }
.slider { appearance: none; width: 107px; height: 16px; margin: 0 0 0 8px; background: none; }
.slider::-webkit-slider-runnable-track { height: 5px; border-radius: 2px; background: linear-gradient(90deg, #7a9ad4 var(--fill), #505050 var(--fill)); }
.slider::-webkit-slider-thumb {
  appearance: none;
  width: 14px;
  height: 14px;
  margin-top: -6px;
  background: url("data:image/svg+xml,%3Csvg xmlns='http://www.w3.org/2000/svg' viewBox='0 0 14 14'%3E%3Cdefs%3E%3ClinearGradient id='g' x2='0' y2='1'%3E%3Cstop stop-color='%23fff'/%3E%3Cstop offset='1' stop-color='%23888'/%3E%3C/linearGradient%3E%3C/defs%3E%3Cpath d='M7 .6Q9 4 13 7v5q0 1.400-1.400 1.400H2.400Q1 13.400 1 12V7Q5 4 7 .6z' fill='url(%23g)' stroke='%23555'/%3E%3C/svg%3E");
}
.foot { display: flex; justify-content: flex-end; padding: 9px 11px 7px; border-top: 1px solid #c0c0c0; }
.foot button { height: 20px; padding: 0 4px; border: 1px solid #b4b4b4; background: #ebebeb; color: #666; font-size: 12px; }

.legend { width: 169px; margin-top: 63px; color: #808080; font-weight: bold; font-size: 10px; letter-spacing: 1px; }
.legend h2 { margin: 0 0 11px; font: inherit; line-height: 16px; }
.level { display: flex; align-items: center; gap: 4px; height: 60px; padding-left: 20px; }
.level i { width: 20px; height: 60px; }
.level span { padding-top: 2px; }
.brand { margin: auto 9px 4px 0; }
</style>
